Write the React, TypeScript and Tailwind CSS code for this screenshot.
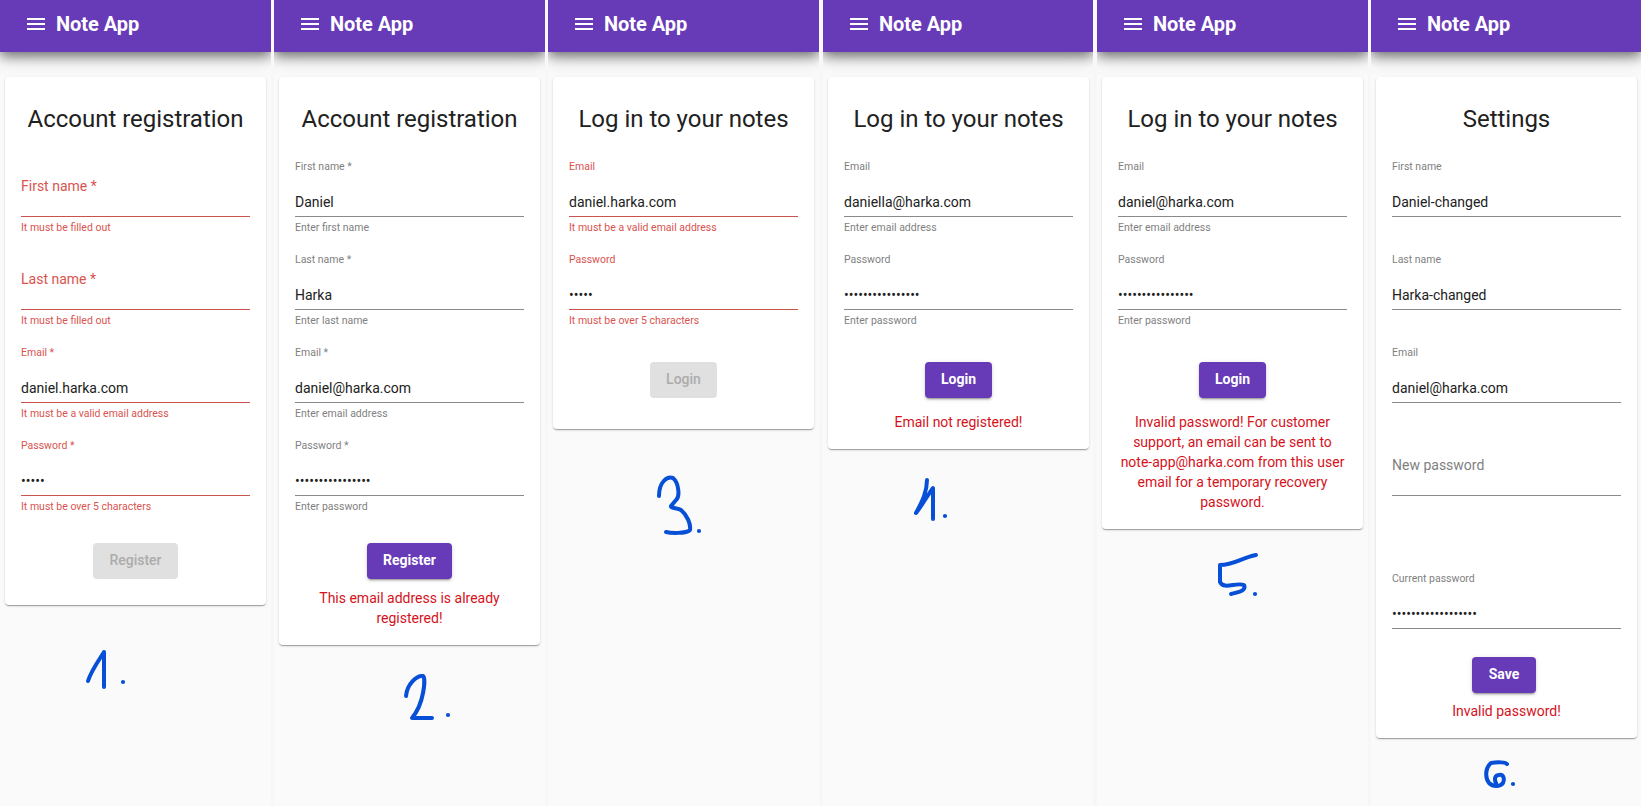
type FieldProps = {
  label: string;
  value?: string;
  hint?: string;
  error?: boolean;
};

function Field({ label, value, hint, error }: FieldProps) {
  const labelColor = error ? "text-[#d9534f]" : "text-[#7f7f7f]";
  return (
    <div className={`flex h-[93px] shrink-0 flex-col ${labelColor}`}>
      {value ? (
        <>
          <div className="h-5 text-[10.5px] leading-[22px]">{label}</div>
          <div className="mt-4 h-5 text-sm leading-5 text-[#212121]">{value}</div>
        </>
      ) : (
        <div className="mt-5 mb-4 h-5 text-sm leading-5">{label}</div>
      )}
      <div className={`mt-1 h-px shrink-0 ${error ? "bg-[#c9544d]" : "bg-[#8a8a8a]"}`} />
      <div className="h-5 text-[10.5px] leading-[22px]">{hint}</div>
    </div>
  );
}

function Button({ label, width, disabled }: { label: string; width: string; disabled?: boolean }) {
  return (
    <button
      className={`block h-9 rounded pb-0.5 text-sm ${width} ${
        disabled
          ? "bg-[#e0e0e0] font-medium text-[#acacac]"
          : "bg-[#673ab7] font-bold text-white shadow-[0_3px_1px_-2px_rgba(0,0,0,0.2),0_2px_2px_0_rgba(0,0,0,0.14),0_1px_5px_0_rgba(0,0,0,0.12)]"
      }`}
    >
      {label}
    </button>
  );
}

type PanelProps = {
  title: string;
  width: string;
  cardHeight: string;
  fields: FieldProps[];
  lastField?: FieldProps;
  button: { label: string; width: string; disabled?: boolean };
  buttonSpacing: string;
  message?: string;
  messageSpacing?: string;
};

function Panel(p: PanelProps) {
  return (
    <section className={`flex shrink-0 flex-col overflow-hidden bg-[#fafafa] ${p.width}`}>
      <header className="flex h-[52px] shrink-0 items-center bg-[#673ab7] pb-1 pl-[27px] text-white shadow-[0_4px_12px_rgba(0,0,0,0.55),0_4px_24px_rgba(0,0,0,0.1)]">
        <svg width="18" height="12" viewBox="0 0 18 12" fill="currentColor">
          <path d="M0 0h18v2H0zM0 5h18v2H0zM0 10h18v2H0z" />
        </svg>
        <span className="ml-[11px] text-[20px] leading-6 font-bold tracking-[-0.05px]">Note App</span>
      </header>
      <div
        className={`mt-[25px] ml-[5px] flex w-[261px] shrink-0 flex-col rounded bg-white px-4 pt-[26px] shadow-[0_2px_1px_-1px_rgba(0,0,0,0.2),0_1px_1px_0_rgba(0,0,0,0.14),0_1px_3px_0_rgba(0,0,0,0.12)] ${p.cardHeight}`}
      >
        <h1 className="mb-5 text-center text-2xl leading-[33px] tracking-[-0.02px] whitespace-nowrap text-[#212121]">
          {p.title}
        </h1>
        {p.fields.map((f) => (
          <Field key={f.label} {...f} />
        ))}
        {p.lastField && (
          <div className="mt-10">
            <Field {...p.lastField} />
          </div>
        )}
        <div className={`flex justify-center ${p.buttonSpacing}`}>
          <Button {...p.button} />
        </div>
        {p.message && (
          <p className={`text-center text-sm leading-5 text-[#d5121b] ${p.messageSpacing}`}>{p.message}</p>
        )}
      </div>
    </section>
  );
}

function Ink({ d, dot, className }: { d: string; dot: [number, number]; className: string }) {
  return (
    <svg
      className={`absolute overflow-visible ${className}`}
      width="60"
      height="70"
      fill="none"
      stroke="#064fd6"
      strokeWidth="4"
      strokeLinecap="round"
      strokeLinejoin="round"
    >
      <path d={d} />
      <circle cx={dot[0]} cy={dot[1]} r="2.1" fill="#064fd6" stroke="none" />
    </svg>
  );
}

const bullets = (n: number) => "•".repeat(n);

export default function App() {
  return (
    <main className="relative flex h-[806px] w-[1641px] overflow-hidden bg-linear-to-b from-[#faf7fd] from-[54px] to-[#f7f7f7] to-[72px] font-['Roboto',sans-serif]">
      <div className="flex justify-between w-full">
        <Panel
          title="Account registration"
          width="w-[271px]"
          cardHeight="h-[528px]"
          fields={[
            { label: "First name *", hint: "It must be filled out", error: true },
            { label: "Last name *", hint: "It must be filled out", error: true },
            { label: "Email *", value: "daniel.harka.com", hint: "It must be a valid email address", error: true },
            { label: "Password *", value: bullets(5), hint: "It must be over 5 characters", error: true },
          ]}
          button={{ label: "Register", width: "w-[85px]", disabled: true }}
          buttonSpacing="mt-[15px]"
        />
        <Panel
          title="Account registration"
          width="ml-[3px] w-[271px]"
          cardHeight="h-[568px]"
          fields={[
            { label: "First name *", value: "Daniel", hint: "Enter first name" },
            { label: "Last name *", value: "Harka", hint: "Enter last name" },
            { label: "Email *", value: "daniel@harka.com", hint: "Enter email address" },
            { label: "Password *", value: bullets(16), hint: "Enter password" },
          ]}
          button={{ label: "Register", width: "w-[85px]" }}
          buttonSpacing="mt-[15px]"
          message="This email address is already registered!"
          messageSpacing="mt-[9px]"
        />
        <Panel
          title="Log in to your notes"
          width="ml-[3px] w-[271px]"
          cardHeight="h-[352px]"
          fields={[
            { label: "Email", value: "daniel.harka.com", hint: "It must be a valid email address", error: true },
            { label: "Password", value: bullets(5), hint: "It must be over 5 characters", error: true },
          ]}
          button={{ label: "Login", width: "w-[67px]", disabled: true }}
          buttonSpacing="mt-5"
        />
        <Panel
          title="Log in to your notes"
          width="ml-1 w-[270px]"
          cardHeight="h-[372px]"
          fields={[
            { label: "Email", value: "daniella@harka.com", hint: "Enter email address" },
            { label: "Password", value: bullets(16), hint: "Enter password" },
          ]}
          button={{ label: "Login", width: "w-[67px]" }}
          buttonSpacing="mt-5"
          message="Email not registered!"
          messageSpacing="mt-[14px]"
        />
        <Panel
          title="Log in to your notes"
          width="ml-1 w-[271px]"
          cardHeight="h-[452px]"
          fields={[
            { label: "Email", value: "daniel@harka.com", hint: "Enter email address" },
            { label: "Password", value: bullets(16), hint: "Enter password" },
          ]}
          button={{ label: "Login", width: "w-[67px]" }}
          buttonSpacing="mt-5"
          message="Invalid password! For customer support, an email can be sent to note-app@harka.com from this user email for a temporary recovery password."
          messageSpacing="mt-[14px]"
        />
        <Panel
          title="Settings"
          width="ml-[3px] w-[270px]"
          cardHeight="h-[661px]"
          fields={[
            { label: "First name", value: "Daniel-changed" },
            { label: "Last name", value: "Harka-changed" },
            { label: "Email", value: "daniel@harka.com" },
            { label: "New password" },
          ]}
          lastField={{ label: "Current password", value: bullets(18) }}
          button={{ label: "Save", width: "w-[64px]" }}
          buttonSpacing="-mt-1 pr-[5px]"
          message="Invalid password!"
          messageSpacing="mt-2"
        />
      </div>

      <Ink className="top-[640px] left-[80px]" d="M8 41C11 31 19 20 24 12L24 47" dot={[43, 42]} />
      <Ink className="top-[665px] left-[400px]" d="M6 31C7 19 17 10 23 11C26 13 24 39 12 53L32 53" dot={[48, 50]} />
      <Ink
        className="top-[470px] left-[650px]"
        d="M9 26C9 12 17 6 23 8C29 13 30 27 26 30L21 36C20 38 28 38 31 40C37 45 41 54 40 60C36 64 20 63 16 62"
        dot={[49, 61]}
      />
      <Ink className="top-[470px] left-[905px]" d="M22 10C22 24 15 35 11 43C18 34 24 23 28 18L28 49" dot={[40, 46]} />
      <Ink
        className="top-[545px] left-[1210px]"
        d="M46 10C31 13 24 20 10 20L10 37C14 45 26 37 34 40C37 46 28 47 21 49"
        dot={[45, 49]}
      />
      <Ink
        className="top-[750px] left-[1480px]"
        d="M27 14C26 12 17 12 11 13C5 18 5 28 9 33C13 37 20 37 23 33C25 28 23 24 19 25C15 25 14 29 16 33"
        dot={[33, 34]}
      />
    </main>
  );
}
